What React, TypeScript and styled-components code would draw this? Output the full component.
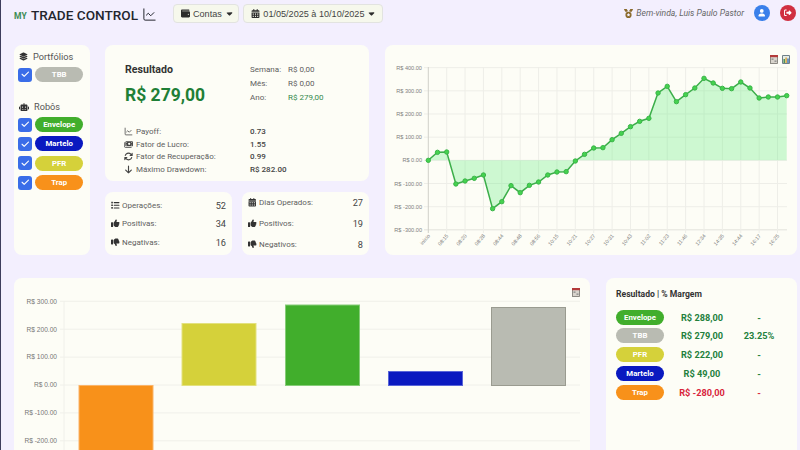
import React from "react";
import styled, { createGlobalStyle } from "styled-components";
import { ChartLine } from "lucide-react";
import {
  FaLayerGroup, FaRobot, FaCheck, FaWallet, FaCaretDown, FaCalendarDays, FaMedal, FaUser,
  FaRightFromBracket, FaMoneyBills, FaArrowsRotate, FaArrowDown, FaList, FaThumbsUp, FaThumbsDown,
} from "react-icons/fa6";

const Global = createGlobalStyle`
  html, body { margin: 0; padding: 0; background: #f3effe; overflow: hidden; }
  * { box-sizing: border-box; }
  body { font-family: Roboto, "Noto Sans", sans-serif; }
`;

const COLORS: Record<string, string> = {
  Envelope: "#41ae2c",
  TBB: "#b9bbb2",
  PFR: "#d5d13a",
  Martelo: "#0a19c0",
  Trap: "#f8911a",
};

const Page = styled.div`
  width: 800px; height: 450px; overflow: hidden; border-left: 1px solid #3d3d5c; padding-left: 13px;
  background: #f3effe; color: #333;
`;
const Header = styled.header`display: flex; align-items: flex-start; height: 45px; padding: 4px 0 0 0; position: relative;`;
const Logo = styled.div`display: flex; align-items: center; width: 159px; height: 21px; color: #23262e; font-size: 13.6px; font-weight: 500; white-space: nowrap;`;
const LogoMy = styled.span`font-size: 8.5px; color: #3c8c55; font-weight: 700; margin-right: 4px; margin-top: 3px; letter-spacing: .2px;`;
const LogoIcon = styled(ChartLine)`margin-left: 4px; margin-top: -1px;`;
const DropButton = styled.div<{ $pr: number }>`
  display: flex; align-items: center; gap: 3px; height: 19px; padding: 0 ${p => p.$pr}px 0 7px; margin-right: 4.5px;
  background: #f6f8ec; border: 1px solid #e2e3e0; border-radius: 4px;
  font: 9.1px "Liberation Sans", sans-serif; color: #444; white-space: nowrap; svg { color: #2c2c2c; flex: none; }
`;
const Welcome = styled.div`
  margin-left: auto; display: flex; align-items: center; height: 18px; padding-right: 4px;
  font-size: 8.6px; font-style: italic; color: #666;
`;
const Medal = styled(FaMedal)`color: #8a6a2c; margin-right: 3px;`;
const RoundButton = styled.div<{ $bg: string; $ml: number }>`
  width: 16px; height: 16px; border-radius: 50%; background: ${p => p.$bg}; margin-left: ${p => p.$ml}px;
  display: flex; align-items: center; justify-content: center; color: #fff; font-size: 7.5px;
`;

const TopGrid = styled.section`display: grid; grid-template-columns: 76px 264px 413px; column-gap: 15px; height: 210px;`;
const Card = styled.div`background: #fdfdf6; border-radius: 8px; position: relative;`;
const Sidebar = styled(Card)`padding: 5px 7px 0 4px;`;
const SideTitle = styled.div`display: flex; align-items: center; gap: 5px; height: 13px; padding-left: 1px; font-size: 9.2px; color: #555; svg { color: #333; flex: none; }`;
const SideList = styled.div`display: flex; flex-direction: column; gap: 4.4px; margin: 4px 0 18px;`;
const SideRow = styled.div`display: flex; align-items: center; gap: 3.5px;`;
const CheckBox = styled.div`width: 14px; height: 14px; border-radius: 3px; background: #3a6de8; color: #fff; display: flex; align-items: center; justify-content: center; font-size: 8.5px;`;
const Pill = styled.div<{ $color: string }>`
  width: 48px; height: 15px; border-radius: 8px; background: ${p => p.$color}; color: #fff;
  display: flex; align-items: center; justify-content: center; font-size: 7.8px; font-weight: 700;
`;
const Middle = styled.div`display: flex; flex-direction: column; gap: 11px;`;
const ResultCard = styled(Card)`height: 136px; padding: 16px 0 0 20px;`;
const ResultTop = styled.div`display: flex; height: 60px;`;
const ResultMain = styled.div`width: 125px;`;
const ResultTitle = styled.div`font-size: 10.6px; font-weight: 700; color: #333; line-height: 18px;`;
const ResultValue = styled.div`font-size: 17.5px; font-weight: 700; color: #1f7f36; line-height: 24px; margin-top: 4px;`;
const Periods = styled.div`display: grid; grid-template-columns: 38px auto; grid-auto-rows: 14px; font-size: 8px; color: #5e5e5e; align-content: start; align-items: center; margin-top: 1px;`;
const PeriodValue = styled.span<{ $green?: boolean }>`color: ${p => (p.$green ? "#338a4c" : "#5e5e5e")};`;
const Metrics = styled.div`display: grid; grid-template-columns: 126px auto; grid-auto-rows: 12.7px; margin: 4px 0 0 -1px; font-size: 8px; align-items: center;`;
const MetricLabel = styled.div`display: flex; align-items: center; gap: 3px; color: #5e5e5e; svg { color: #444; flex: none; width: 9px; height: 9px; }`;
const MetricValue = styled.div`color: #444; font-weight: 500;`;
const SmallGrid = styled.div`display: grid; grid-template-columns: 127px 127px; column-gap: 10px;`;
const SmallCard = styled(Card)<{ $gap: number }>`
  height: 63px; padding: 0 6px; display: flex; flex-direction: column; justify-content: center; gap: ${p => p.$gap}px;
`;
const StatRow = styled.div`display: flex; align-items: center; height: 12px; font-size: 8px; color: #5e5e5e;`;
const StatIcon = styled.span<{ $w: number }>`display: flex; width: ${p => p.$w}px; color: #333; svg { width: 8.5px; height: 8.5px; }`;
const StatValue = styled.span`margin-left: auto; font-size: 9.2px; color: #444;`;
const ChartCard = styled(Card)`overflow: hidden; svg { display: block; }`;
const AreaCard = styled(ChartCard)`margin-left: 1px;`;
const Tools = styled.div`position: absolute; display: flex; gap: 4.5px; top: 10px; right: 7px;`;
const BottomGrid = styled.section`display: grid; grid-template-columns: 576px 191px; column-gap: 16px; margin-top: 23px;`;
const BarCard = styled(ChartCard)`height: 200px;`;
const BarTools = styled(Tools)`right: 10px; top: 10px;`;
const TableCard = styled(Card)`height: 200px; padding: 10px 0 0 10px;`;
const TableTitle = styled.div`font-size: 8.6px; font-weight: 700; color: #333; line-height: 12px; margin-bottom: 9.5px;`;
const TableRows = styled.div`display: grid; grid-template-columns: 48px 76px 38px; grid-auto-rows: 15px; row-gap: 3.8px; align-items: center;`;
const Amount = styled.div<{ $neg?: boolean }>`text-align: center; font-size: 9.2px; font-weight: 700; color: ${p => (p.$neg ? "#d8253c" : "#23803c")};`;

const CalendarIcon = () => (
  <svg width="8" height="9" viewBox="0 0 8 9">
    <rect x="0.5" y="0.5" width="7" height="8" fill="#d8d4cc" stroke="#77746e" strokeWidth=".8" />
    <rect x="0" y="0" width="8" height="2.2" fill="#b33a3a" />
    <rect x="1.5" y="3.5" width="2" height="1.3" fill="#888" /><rect x="4.5" y="5.5" width="2" height="1.3" fill="#888" />
  </svg>
);
const TableIcon = () => (
  <svg width="8" height="9" viewBox="0 0 8 9">
    <rect x="0" y="0" width="8" height="9" rx="1" fill="#6f7f88" />
    <rect x="1" y="1" width="6" height="7" fill="#e4ece8" />
    <rect x="1.5" y="4" width="1.4" height="4" fill="#3f8a4a" /><rect x="3.4" y="2.5" width="1.4" height="5.5" fill="#d8a030" /><rect x="5.3" y="3.5" width="1.4" height="4.5" fill="#3a70b8" />
  </svg>
);

const ys = [346,322,321,417,408,400,390,491,470,422,443,421,411,390,381,380,348,328,309,308,284,265,245,229,220,144,124,170,149,129,100,114,130,131,111,129,159,156,156,152];
const times = ["início","08:15","08:20","08:28","08:44","08:48","08:56","10:15","10:21","10:27","10:31","10:43","11:02","11:23","11:46","12:34","14:35","14:44","16:17","16:25"];
const px = (i: number) => 428.3 + i * 9.19;
const py = (z: number) => 45 + z / 3;
const ZERO = py(346);

const AreaChart = () => {
  const line = ys.map((z, i) => `${px(i).toFixed(1)},${py(z).toFixed(1)}`).join(" ");
  const levels = [400, 300, 200, 100, 0, -100, -200, -300];
  return (
    <svg width="412" height="210" viewBox="385 45 412 210">
      {levels.map(v => {
        const y = ZERO - v * 0.2317;
        return (
          <g key={v}>
            <line x1="424" x2="787" y1={y} y2={y} stroke={v === -300 ? "#e2e2dc" : "#eeeee8"} />
            <text x="422" y={y + 2} textAnchor="end" fontSize="5.6" fill="#808080" fontFamily="Liberation Sans">{`R$ ${v}.00`}</text>
          </g>
        );
      })}
      {times.map((t, k) => {
        const x = px(k * 2);
        return (
          <g key={t}>
            <line x1={x} x2={x} y1="67" y2="233" stroke={k === 0 ? "#d0d0ca" : "#eeeee8"} />
            <text transform={`translate(${x + 2} 236) rotate(-50)`} textAnchor="end" fontSize="5.2" fill="#808080" fontFamily="Liberation Sans">{t}</text>
          </g>
        );
      })}
      <polygon points={`${px(0)},${ZERO} ${line} ${px(39)},${ZERO}`} fill="rgba(70,235,105,.26)" />
      <polyline points={line} fill="none" stroke="#3cae4a" strokeWidth="1.5" />
      {ys.map((z, i) => <circle key={i} cx={px(i)} cy={py(z)} r="2.2" fill="#45d24f" stroke="#3ab548" strokeWidth="1" />)}
    </svg>
  );
};

const bars = [
  { x: 78.5, top: 385, h: 80, c: "#f8911a", b: "#fbb468" },
  { x: 181.5, top: 323, h: 62, c: "#d5d13a", b: "#e3e17e" },
  { x: 285, top: 304.5, h: 80.5, c: "#41ae2c", b: "#86cc78" },
  { x: 388, top: 371, h: 14, c: "#0a19c0", b: "#5a66d8" },
  { x: 491, top: 307, h: 78, c: "#b9bbb2", b: "#9a9b90" },
];
const BarChart = () => (
  <svg width="576" height="200" viewBox="14 278 576 200">
    <line x1="64" x2="64" y1="301" y2="478" stroke="#f0f0ea" />
    {[300, 200, 100, 0, -100, -200].map(v => {
      const y = 385 - v * 0.279;
      return (
        <g key={v}>
          <line x1="60" x2="580" y1={y} y2={y} stroke="#f0f0ea" />
          <text x="57" y={y + 2.3} textAnchor="end" fontSize="6.6" fill="#777" fontFamily="Liberation Sans">{`R$ ${v}.00`}</text>
        </g>
      );
    })}
    {bars.map(b => <rect key={b.x} x={b.x + 0.5} y={b.top + 0.5} width="74" height={b.h} fill={b.c} stroke={b.b} />)}
  </svg>
);

const results = [
  { n: "Envelope", v: "R$ 288,00", m: "-" },
  { n: "TBB", v: "R$ 279,00", m: "23.25%" },
  { n: "PFR", v: "R$ 222,00", m: "-" },
  { n: "Martelo", v: "R$ 49,00", m: "-" },
  { n: "Trap", v: "R$ -280,00", m: "-", neg: true },
];

const Bot = ({ name }: { name: string }) => (
  <SideRow><CheckBox><FaCheck /></CheckBox><Pill $color={COLORS[name]}>{name}</Pill></SideRow>
);

export default function App() {
  return (
    <Page>
      <Global />
      <Header>
        <Logo><LogoMy>MY</LogoMy>TRADE CONTROL<LogoIcon size={15} strokeWidth={1.6} /></Logo>
        <DropButton $pr={4}><FaWallet size={9} /> Contas <FaCaretDown size={9} /></DropButton>
        <DropButton $pr={6}><FaCalendarDays size={9} /> 01/05/2025 à 10/10/2025 <FaCaretDown size={9} /></DropButton>
        <Welcome>
          <Medal size={9} /> Bem-vinda, Luis Paulo Pastor
          <RoundButton $bg="#3a80ea" $ml={10}><FaUser /></RoundButton>
          <RoundButton $bg="#d02f40" $ml={10}><FaRightFromBracket /></RoundButton>
        </Welcome>
      </Header>
      <TopGrid>
        <Sidebar>
          <SideTitle><FaLayerGroup size={9} />Portfólios</SideTitle>
          <SideList><Bot name="TBB" /></SideList>
          <SideTitle><FaRobot size={10} />Robôs</SideTitle>
          <SideList>{["Envelope", "Martelo", "PFR", "Trap"].map(n => <Bot key={n} name={n} />)}</SideList>
        </Sidebar>
        <Middle>
          <ResultCard>
            <ResultTop>
              <ResultMain>
                <ResultTitle>Resultado</ResultTitle>
                <ResultValue>R$ 279,00</ResultValue>
              </ResultMain>
              <Periods>
                <span>Semana:</span><PeriodValue>R$ 0,00</PeriodValue>
                <span>Mês:</span><PeriodValue>R$ 0,00</PeriodValue>
                <span>Ano:</span><PeriodValue $green>R$ 279,00</PeriodValue>
              </Periods>
            </ResultTop>
            <Metrics>
              <MetricLabel><ChartLine />Payoff:</MetricLabel><MetricValue>0.73</MetricValue>
              <MetricLabel><FaMoneyBills />Fator de Lucro:</MetricLabel><MetricValue>1.55</MetricValue>
              <MetricLabel><FaArrowsRotate />Fator de Recuperação:</MetricLabel><MetricValue>0.99</MetricValue>
              <MetricLabel><FaArrowDown />Máximo Drawdown:</MetricLabel><MetricValue>R$ 282.00</MetricValue>
            </Metrics>
          </ResultCard>
          <SmallGrid>
            <SmallCard $gap={6.5}>
              <StatRow><StatIcon $w={11}><FaList /></StatIcon>Operações:<StatValue>52</StatValue></StatRow>
              <StatRow><StatIcon $w={11}><FaThumbsUp /></StatIcon>Positivas:<StatValue>34</StatValue></StatRow>
              <StatRow><StatIcon $w={11}><FaThumbsDown /></StatIcon>Negativas:<StatValue>16</StatValue></StatRow>
            </SmallCard>
            <SmallCard $gap={9}>
              <StatRow><StatIcon $w={11}><FaCalendarDays /></StatIcon>Dias Operados:<StatValue>27</StatValue></StatRow>
              <StatRow><StatIcon $w={11}><FaThumbsUp /></StatIcon>Positivos:<StatValue>19</StatValue></StatRow>
              <StatRow><StatIcon $w={11}><FaThumbsDown /></StatIcon>Negativos:<StatValue>8</StatValue></StatRow>
            </SmallCard>
          </SmallGrid>
        </Middle>
        <AreaCard>
          <AreaChart />
          <Tools><CalendarIcon /><TableIcon /></Tools>
        </AreaCard>
      </TopGrid>
      <BottomGrid>
        <BarCard>
          <BarChart />
          <BarTools><CalendarIcon /></BarTools>
        </BarCard>
        <TableCard>
          <TableTitle>Resultado | % Margem</TableTitle>
          <TableRows>
            {results.map(r => (
              <React.Fragment key={r.n}>
                <Pill $color={COLORS[r.n]}>{r.n}</Pill>
                <Amount $neg={r.neg}>{r.v}</Amount>
                <Amount $neg={r.neg}>{r.m}</Amount>
              </React.Fragment>
            ))}
          </TableRows>
        </TableCard>
      </BottomGrid>
    </Page>
  );
}
